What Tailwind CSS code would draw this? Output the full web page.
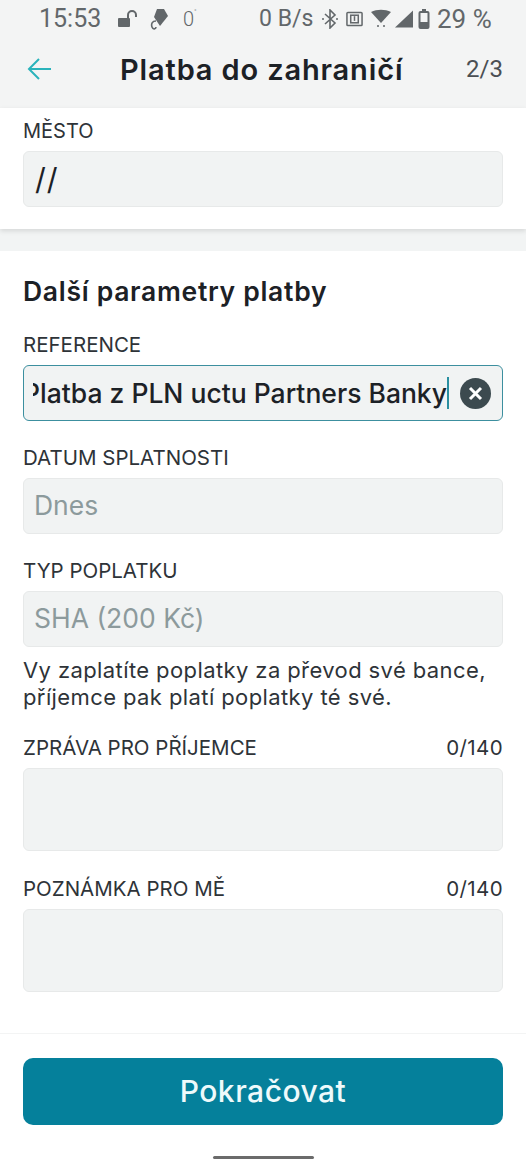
<!DOCTYPE html>
<html lang="cs">
<head>
  <meta charset="UTF-8">
  <meta name="viewport" content="width=device-width, initial-scale=1.0">
  <title>Platba do zahraničí</title>
  <script src="https://cdn.jsdelivr.net/npm/@tailwindcss/browser@4"></script>
</head>
<body class="bg-white font-['Inter',sans-serif] text-[#1c2126]">
  <div class="w-[526px] h-[1168px] overflow-hidden flex flex-col">
    <!-- Header -->
    <header class="h-[108px] shrink-0 bg-[#f3f4f4]">
      <div class="h-[37px] pl-[39px] flex items-center font-['Roboto',sans-serif] text-[#62676a]">
        <span class="text-[25px] leading-none w-[79px] shrink-0">15:53</span>
        <svg class="w-[20px] h-[20px] mr-[11px] shrink-0" viewBox="0 0 20 20" fill="#62676a"><rect x="0" y="9" width="12" height="9" rx="1"/><path d="M10 9V6a4 4 0 0 1 8 0v2" fill="none" stroke="#62676a" stroke-width="2"/></svg>
        <svg class="w-[20px] h-[22px] shrink-0" viewBox="0 0 20 22" fill="#62676a"><path d="M8 1h7l4 7-8 10-6-9z"/><path d="M7 13c-4 0-5 3-4 6s4 2 4 0" fill="none" stroke="#62676a" stroke-width="1.6"/></svg>
        <span class="text-[20px] leading-none font-light ml-[14px] w-[16px] shrink-0 flex items-start">0<span class="text-[7px] leading-none">°</span></span>
        <span class="text-[23px] leading-none ml-[60px] whitespace-nowrap w-[54px] shrink-0">0 B/s</span>
        <svg class="w-[16px] h-[20px] ml-[9px] shrink-0" viewBox="0 0 16 20" fill="none" stroke="#62676a" stroke-width="1.6"><path d="M3 5l10 9-5 5V1l5 5L3 15"/><circle cx="1" cy="10" r="1" fill="#62676a" stroke="none"/><circle cx="15" cy="10" r="1" fill="#62676a" stroke="none"/></svg>
        <svg class="w-[17px] h-[18px] ml-[8px] shrink-0" viewBox="0 0 18 18" fill="none" stroke="#62676a" stroke-width="1.6"><rect x="1" y="2" width="16" height="14" rx="1"/><rect x="5" y="5" width="8" height="8"/><path d="M9 6v5"/></svg>
        <svg class="w-[20px] h-[20px] ml-[8px] shrink-0" viewBox="0 0 20 20" fill="#62676a"><path d="M0 3c6-3 14-3 20 0l-10 11z"/><circle cx="7" cy="17" r="1"/><circle cx="13" cy="17" r="1"/></svg>
        <svg class="w-[19px] h-[20px] ml-[3px] shrink-0" viewBox="0 0 20 20" fill="#62676a"><path d="M20 1v18H1z"/></svg>
        <svg class="w-[12px] h-[20px] ml-[5px] shrink-0" viewBox="0 0 11 20"><rect x="1" y="3" width="9" height="16" rx="1" fill="none" stroke="#62676a" stroke-width="2"/><rect x="3.5" y="0" width="4" height="3" fill="#62676a"/><rect x="1" y="13" width="9" height="6" fill="#62676a"/></svg>
        <span class="text-[26px] leading-none ml-[7px] whitespace-nowrap">29 %</span>
      </div>
      <div class="h-[64px] pl-[27px] pr-[23px] flex items-center">
        <svg class="w-[25px] h-[24px] shrink-0" viewBox="0 0 25 24" fill="none" stroke="#2ab3bb" stroke-width="2"><path d="M24 12H2M12 2L2 12l10 10"/></svg>
        <h1 class="ml-[68px] text-[29px] font-semibold tracking-[0.85px] leading-none whitespace-nowrap">Platba do zahraničí</h1>
        <span class="ml-auto text-[24px] leading-none text-[#4a4f53] font-['Roboto',sans-serif]">2/3</span>
      </div>
    </header>

    <!-- Mesto -->
    <section class="h-[121px] shrink-0 px-[23px] pt-[11px] shadow-[0_2px_5px_rgba(0,0,0,0.12)] relative">
      <p class="h-[24px] text-[20px] leading-[24px] text-[#2e3338]">MĚSTO</p>
      <div class="mt-[8px] h-[56px] px-[11px] flex items-center rounded-md bg-[#f1f3f3] border border-[#e7e9e9] text-[30px] tracking-[1px]">//</div>
    </section>
    <div class="h-[22px] shrink-0 bg-[#f2f4f4]"></div>

    <!-- Dalsi parametry -->
    <main class="flex-1 px-[23px] pt-[26px]">
      <h2 class="h-[28px] text-[26.5px] leading-[28px] font-semibold tracking-[0.7px] whitespace-nowrap">Další parametry platby</h2>

      <p class="mt-[28px] h-[24px] text-[20.5px] leading-[24px] text-[#2e3338]">REFERENCE</p>
      <div class="mt-[8px] h-[56px] pl-[9px] pr-[11px] flex items-center gap-[11px] rounded-md bg-[#f1f3f3] border-[1.5px] border-[#3c8f9f]">
        <div class="flex-1 min-w-0 overflow-hidden flex justify-end">
          <span class="whitespace-nowrap text-[26.5px] font-medium leading-[32px] shrink-0 border-r-2 border-[#2a8fa0]">Platba z PLN uctu Partners Banky</span>
        </div>
        <div class="w-[31px] h-[31px] shrink-0 rounded-full bg-[#3c4a4f] flex items-center justify-center">
          <svg class="w-[15px] h-[15px]" viewBox="0 0 15 15" fill="none" stroke="#fff" stroke-width="3"><path d="M2 2l11 11M13 2L2 13"/></svg>
        </div>
      </div>

      <p class="mt-[25px] h-[24px] text-[20.5px] leading-[24px] text-[#2e3338]">DATUM SPLATNOSTI</p>
      <div class="mt-[8px] h-[56px] px-[10px] flex items-center rounded-md bg-[#f1f3f3] border border-[#e7e9e9] text-[26.5px] text-[#8c9a9c]">Dnes</div>

      <p class="mt-[25px] h-[24px] text-[20.5px] leading-[24px] text-[#2e3338]">TYP POPLATKU</p>
      <div class="mt-[8px] h-[56px] px-[10px] flex items-center rounded-md bg-[#f1f3f3] border border-[#e7e9e9] text-[26.5px] text-[#8c9a9c]">SHA (200 Kč)</div>

      <p class="mt-[10px] text-[22px] tracking-[0.4px] leading-[27px] text-[#2e3338] whitespace-nowrap">Vy zaplatíte poplatky za převod své bance,<br>příjemce pak platí poplatky té své.</p>

      <div class="mt-[25px] h-[24px] flex justify-between text-[20.5px] leading-[24px] text-[#2e3338]">
        <span>ZPRÁVA PRO PŘÍJEMCE</span><span class="tracking-[0.4px]">0/140</span>
      </div>
      <div class="mt-[8px] h-[83px] rounded-md bg-[#f1f3f3] border border-[#e7e9e9]"></div>

      <div class="mt-[26px] h-[24px] flex justify-between text-[20.5px] leading-[24px] text-[#2e3338]">
        <span>POZNÁMKA PRO MĚ</span><span class="tracking-[0.4px]">0/140</span>
      </div>
      <div class="mt-[8px] h-[83px] rounded-md bg-[#f1f3f3] border border-[#e7e9e9]"></div>
    </main>

    <!-- Footer -->
    <footer class="h-[135px] shrink-0 border-t border-[#f3f4f4] px-[23px] pt-[24px]">
      <button class="w-full h-[67px] rounded-[10px] bg-[#05809b] text-[#eefafb] text-[30px] tracking-[0.5px] font-medium">Pokračovat</button>
      <div class="mt-[31px] mx-auto w-[101px] h-[3px] rounded-full bg-[#6b6b6b]"></div>
    </footer>
  </div>
</body>
</html>
